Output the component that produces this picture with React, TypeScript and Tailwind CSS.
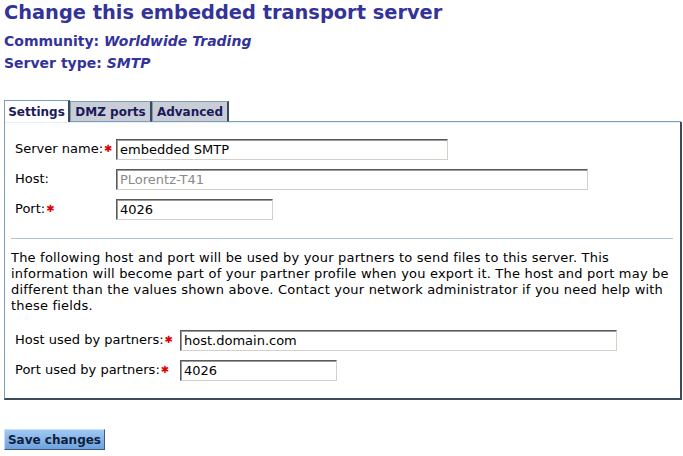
import React from "react";

function Star() {
  return <span className="text-[#e00000] text-[10px] leading-none relative top-[-1px] ml-[1px]">✱</span>;
}

function Field({ label, value, width, req, disabled, labelW }: { label: string; value: string; width: string; req?: boolean; disabled?: boolean; labelW: string }) {
  return (
    <div className="flex items-start h-[30px] pl-[4px]">
      <div className={`${labelW} pt-[2px] text-[13px] leading-[16px] text-black whitespace-nowrap`}>
        {label}
        {req && <Star />}
      </div>
      <div
        className={`${width} h-[21px] border border-t-[#5a5a5a] border-l-[#5a5a5a] border-r-[#d4d0c8] border-b-[#d4d0c8] shadow-[inset_1px_1px_0_#9a9a9a] bg-white pl-[3px] pt-[2px] text-[13px] leading-[16px] ${disabled ? "text-[#8a8a8a]" : "text-black"}`}
      >
        {value}
      </div>
    </div>
  );
}

export default function App() {
  return (
    <div className="w-[683px] h-[456px] bg-white pl-[4px] pr-[2px] font-['DejaVu_Sans',Verdana,sans-serif] overflow-hidden">
      <h1 className="text-[19.4px] leading-[26px] font-bold text-[#333399]">Change this embedded transport server</h1>
      <div className="mt-[6px] text-[14px] leading-[18px] font-bold text-[#333399]">
        Community: <i>Worldwide Trading</i>
      </div>
      <div className="mt-[4px] text-[14px] leading-[18px] font-bold text-[#333399]">
        Server type: <i>SMTP</i>
      </div>

      <div className="mt-[28px] flex items-end h-[22px] relative z-10">
        <div className="w-[66px] h-[22px] bg-white border-t border-l border-[#7f9db9] border-r-2 border-r-[#3b4b5c] text-[12px] font-bold text-[#1a1a5a] flex items-center justify-center">
          Settings
        </div>
        <div className="w-[82px] h-[21px] bg-[#c9cdd6] border-t border-l border-[#7f9db9] border-r-2 border-r-[#3b4b5c] border-b border-b-[#7f9db9] text-[12px] font-bold text-[#1a1a5a] flex items-center justify-center">
          DMZ ports
        </div>
        <div className="w-[77px] h-[21px] bg-[#c9cdd6] border-t border-l border-[#7f9db9] border-r-2 border-r-[#3b4b5c] border-b border-b-[#7f9db9] text-[12px] font-bold text-[#1a1a5a] flex items-center justify-center">
          Advanced
        </div>
        <div className="flex-1 h-[1px] bg-[#7f9db9]" />
      </div>

      <div className="w-[678px] h-[278px] border-l border-l-[#7f9db9] border-r-2 border-r-[#3b4b5c] border-b-2 border-b-[#3b4b5c] shadow-[inset_0_1px_0_#dff0fa] pt-[17px] pl-[6px] pr-[6px]">
        <Field label="Server name:" req value="embedded SMTP" width="w-[332px]" labelW="w-[101px]" />
        <Field label="Host:" value="PLorentz-T41" width="w-[472px]" disabled labelW="w-[101px]" />
        <Field label="Port:" req value="4026" width="w-[157px]" labelW="w-[101px]" />
        <div className="mt-[9px] h-[1px] bg-[#a9c6dd] mr-[1px]" />
        <p className="mt-[11px] text-[13px] leading-[16px] tracking-[0.2px] text-black pr-[2px]">
          The following host and port will be used by your partners to send files to this server. This information will become part of your partner profile when you export it. The host and port may be different than the values shown above. Contact your network administrator if you need help with these fields.
        </p>
        <div className="mt-[16px]">
          <Field label="Host used by partners:" req value="host.domain.com" width="w-[437px]" labelW="w-[165px]" />
          <Field label="Port used by partners:" req value="4026" width="w-[157px]" labelW="w-[165px]" />
        </div>
      </div>

      <button className="mt-[29px] w-[101px] h-[21px] border border-t-[#c8e0f8] border-l-[#c8e0f8] border-r-[#3b5b7c] border-b-[#3b5b7c] bg-gradient-to-b from-[#a0c8f2] to-[#6ea2de] text-[12px] font-bold text-[#0f1f3f] leading-[18px]">
        Save changes
      </button>
    </div>
  );
}
